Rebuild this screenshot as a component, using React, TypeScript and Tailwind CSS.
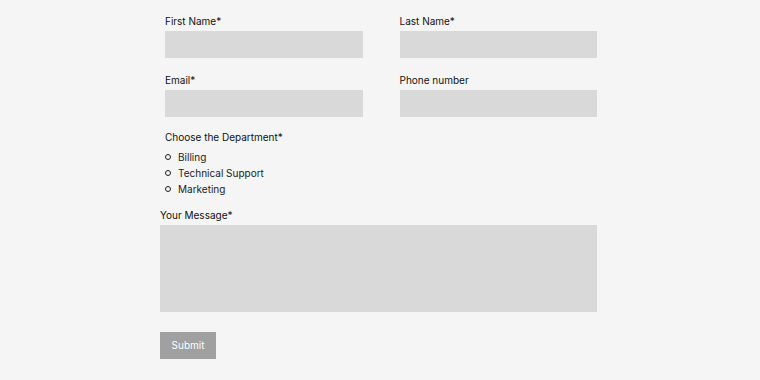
const Field = ({ label }: { label: string }) => (
  <div className="flex flex-col">
    <label className="text-[10px] leading-[14px] text-[#111]">{label}</label>
    <input className="mt-[3px] h-[27px] w-full bg-[#d9d9d9] outline-none" />
  </div>
);

const departments = ["Billing", "Technical Support", "Marketing"];

export default function App() {
  return (
    <div
      className="min-h-[380px] w-full bg-[#f5f5f5] pt-[14px]"
      style={{ fontFamily: "Inter, 'Liberation Sans', sans-serif" }}
    >
      <form className="ml-[160px] w-[437px]" onSubmit={(e) => e.preventDefault()}>
        <div className="ml-[5px] grid grid-cols-2 gap-x-[37px] gap-y-[15px]">
          <Field label="First Name*" />
          <Field label="Last Name*" />
          <Field label="Email*" />
          <Field label="Phone number" />
        </div>

        <div className="ml-[5px] mt-[13px]">
          <p className="text-[10px] leading-[14px] text-[#111]">Choose the Department*</p>
          <ul className="mt-[5px] flex flex-col">
            {departments.map((d) => (
              <li key={d} className="flex h-[16px] items-center gap-[7px] text-[10px] text-[#222]">
                <span className="h-[6px] w-[6px] rounded-full border border-[#222]" />
                {d}
              </li>
            ))}
          </ul>
        </div>

        <div className="mt-[11px] flex flex-col">
          <label className="text-[10px] leading-[14px] text-[#111]">Your Message*</label>
          <textarea className="mt-[3px] h-[87px] w-full resize-none bg-[#d9d9d9] outline-none" />
        </div>

        <button
          type="submit"
          className="mt-[20px] h-[27px] w-[56px] bg-[#a0a0a0] text-[10px] text-white"
        >
          Submit
        </button>
      </form>
    </div>
  );
}
